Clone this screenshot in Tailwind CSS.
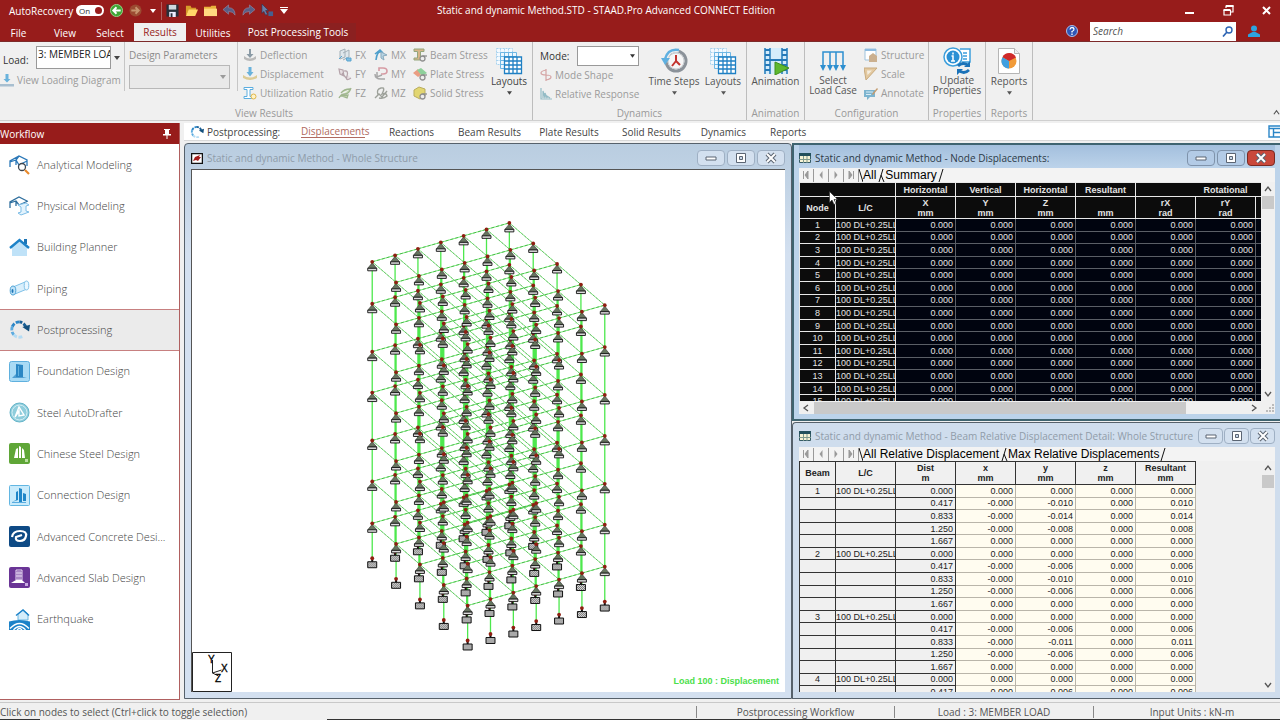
<!DOCTYPE html>
<html lang="en">
<head>
  <meta charset="UTF-8">
  <title>Static and dynamic Method.STD - STAAD.Pro Advanced CONNECT Edition</title>
  <meta name="viewport" content="width=device-width, initial-scale=1.0">
  <script src="https://cdn.jsdelivr.net/npm/@tailwindcss/browser@4"></script>
</head>
<body class="h-screen overflow-hidden flex flex-col bg-[#f0f0f0] text-[#444] text-[10px] leading-3 font-['Open_Sans','Noto_Sans',sans-serif] whitespace-nowrap">

  <!-- ICON SPRITES -->
  <svg class="hidden">
    <symbol id="i-down" viewBox="0 0 6 4"><path d="M0 0h6L3 4z" fill="currentColor"/></symbol>
    <symbol id="i-layouts" viewBox="0 0 28 28">
      <g fill="#f4faff" stroke="#a8d2ee"><path d="M1.5 1.5h16v16h-16zM1.5 5.500h16M1.500 9.500h16M1.500 13.500h16M5.500 1.500v16M9.500 1.500v16M13.500 1.500v16" stroke-dasharray="2 1"/></g>
      <path d="M5.500 5.500h16v16h-16zM5.500 9.500h16M5.500 13.500h16M5.500 17.500h16M9.500 5.500v16M13.500 5.500v16M17.500 5.500v16" fill="#eef8ff" stroke="#6fb7e4"/>
      <path d="M9.500 10h17v16.500h-17zM9.500 14h17M9.500 18h17M9.500 22h17M14 10v16.500M18 10v16.500M22 10v16.500" fill="#fff" stroke="#1f80c4" stroke-width="1.300"/>
    </symbol>
    <symbol id="i-deflect" viewBox="0 0 14 14"><path d="M1 8q6 5 12 0v3q-6 4-12 0z" fill="#b9b9b9"/><path d="M6 1h2v5h2.500L7 10 3.500 6H6z" fill="#8a9aa5"/></symbol>
    <symbol id="i-displ" viewBox="0 0 14 14"><path d="M0 8q7 5 14 0v3q-7 4-14 0z" fill="#dccb96"/><path d="M5.500 0h3v5h2L7 9.500 3.500 5h2z" fill="#69b2dc"/></symbol>
    <symbol id="i-util" viewBox="0 0 14 14"><path d="M1 1.500h9v2H7v7h2v2H1v-2h3v-7H1z" fill="#fff" stroke="#5caee0"/><circle cx="10.500" cy="10.500" r="2.500" fill="#fff3c8" stroke="#e0b64a"/></symbol>
    <symbol id="i-fx" viewBox="0 0 14 14"><path d="M2 3l5-2v8l-5 2zM5 5l6-3v7l-6 3" fill="#dfe7ec" stroke="#a3b0b8"/><path d="M1 11l3-3m4 2h5v3h-4z" stroke="#5aa5d0" fill="#7fbde0"/></symbol>
    <symbol id="i-fy" viewBox="0 0 14 14"><path d="M1 2l4 1 1 6-4-2zM6 4q5-1 3 5t4 2M4 6l5 6" fill="#e7dfe2" stroke="#b5a3aa" stroke-width="1.200"/></symbol>
    <symbol id="i-fz" viewBox="0 0 14 14"><path d="M1 12q2-4 6-4T13 2M3 7q3-4 9-4M4 10l6-1-1 3z" fill="#c9dcb5" stroke="#9fb58e" stroke-width="1.300"/></symbol>
    <symbol id="i-mx" viewBox="0 0 14 14"><path d="M2 12q1-9 5-8M1 6l5-4 3 3" fill="none" stroke="#4d9fcc" stroke-width="1.600"/><path d="M7 4l6 3-4 1 1 4-3-2z" fill="#b8d4e4" stroke="#87a9bd"/></symbol>
    <symbol id="i-my" viewBox="0 0 14 14"><path d="M5 4V1h4q4 0 4 3t-4 3H7" fill="none" stroke="#d69aa3" stroke-width="1.600"/><path d="M1 7q0 5 6 5h4M3 5v5l5-2" fill="none" stroke="#a8a8a8" stroke-width="1.500"/></symbol>
    <symbol id="i-mz" viewBox="0 0 14 14"><path d="M1 12l4-4 3 3 5-6M4 9q-2-6 3-7t1 6q4-2 5 2-3 3-8 2" fill="none" stroke="#9da19a" stroke-width="1.400"/></symbol>
    <symbol id="i-sigma" viewBox="0 0 8 8"><circle cx="3.500" cy="4.500" r="2.500" fill="#eee" stroke="#8f8f8f" stroke-width="1.300"/><path d="M3.500 2H8" stroke="#8f8f8f" stroke-width="1.300"/></symbol>
    <symbol id="i-beam" viewBox="0 0 14 14"><path d="M1 1h10v2.500H7.500v6.500H9V12H1v-2h3.500V3.500H1z" fill="#d7b588" stroke="#94a67c"/><use href="#i-sigma" x="6" y="6" width="8" height="8"/></symbol>
    <symbol id="i-plate" viewBox="0 0 14 14"><path d="M0 6l5-4 3 6-3 2z" fill="#ea9e83"/><path d="M4 3l4-2 6 5-5 3z" fill="#8ed09b"/><use href="#i-sigma" x="6" y="6" width="8" height="8"/></symbol>
    <symbol id="i-solid" viewBox="0 0 14 14"><path d="M1 4l5-3 6 2v7l-5 3-6-3z" fill="#e2d671" stroke="#b9ad5e"/><use href="#i-sigma" x="6" y="6" width="8" height="8"/></symbol>
    <symbol id="i-post" viewBox="0 0 22 22">
      <path d="M17.500 8A8 8 0 0 0 11 3" stroke="#1a5f95"/><path d="M11 3A8 8 0 0 0 3.500 8" stroke="#2c86c6"/><path d="M3.500 8A8 8 0 0 0 5 16.500" stroke="#5cabdf"/><path d="M5 16.500A8 8 0 0 0 15 18" stroke="#b4dcf4"/>
      <path d="M14 8.500l8-2.500-1 7z" fill="#14507d"/>
    </symbol>
    <symbol id="i-table" viewBox="0 0 12 10"><path d="M.5.500h11v9H.500z" fill="#f6f2d5" stroke="#355b66"/><path d="M0 0h12v3H0z" fill="#23505c"/><path d="M0 6.500h12M4.500 3v7M8 3v7" stroke="#7f9a8c"/></symbol>
    <symbol id="i-min" viewBox="0 0 12 12"><path d="M1 5h10v3H1z" fill="#fff" stroke="#5b6573" /></symbol>
    <symbol id="i-max" viewBox="0 0 12 12"><path d="M1.500 1.500h9v9h-9z" fill="#fff" stroke="#5b6573"/><path d="M4.500 4.500h3v3h-3z" fill="#c8d8ea" stroke="#5b6573"/></symbol>
    <symbol id="i-x" viewBox="0 0 12 12"><path d="M2 2l8 8M10 2l-8 8" stroke="#5b6573" stroke-width="4"/><path d="M2 2l8 8M10 2l-8 8" stroke="#fff" stroke-width="2"/></symbol>
    <symbol id="i-first" viewBox="0 0 8 8"><path d="M1.500 0v8M6 0L3 4l3 4z" fill="#999" stroke="#999"/></symbol>
    <symbol id="i-prev" viewBox="0 0 8 8"><path d="M5.500 0l-3 4 3 4z" fill="#999"/></symbol>
    <symbol id="i-chev" viewBox="0 0 8 8"><path d="M1 6l3-4 3 4" fill="none" stroke="#555" stroke-width="1.300"/></symbol>
  </svg>

  <!-- TITLE BAR -->
  <header class="bg-[#971c1b] text-white border-b border-[#7d2a2a]">
    <div class="flex items-center h-[21px] pl-[9px] relative">
      <label for="autorec" class="w-[67px]">AutoRecovery</label>
      <span class="relative flex items-center w-7 h-[11px] bg-white rounded-full">
        <input id="autorec" type="checkbox" checked class="absolute inset-0 opacity-0">
        <span class="text-[8px] leading-[10px] text-[#333] pl-[3px]">On</span>
        <span class="ml-auto mr-[2px] size-[7px] rounded-full bg-[#971c1b]"></span>
      </span>
      <div class="flex items-center gap-[6px] ml-[6px]">
        <button aria-label="Back"><svg class="size-[13px]" viewBox="0 0 14 14"><circle cx="7" cy="7" r="6.500" fill="#3fa535" stroke="#9bd88f"/><path d="M11.500 7H4M7 3.500L3.500 7 7 10.500" fill="none" stroke="#fff" stroke-width="2"/></svg></button>
        <button aria-label="Forward"><svg class="size-[13px]" viewBox="0 0 14 14"><circle cx="7" cy="7" r="6.500" fill="#9b4a31"/><path d="M2.500 7H10M7 3.500L10.500 7 7 10.500" fill="none" stroke="#c8946f" stroke-width="2"/></svg></button>
        <button aria-label="History" class="ml-[2px]"><svg class="w-[6px] h-1"><use href="#i-down"/></svg></button>
      </div>
      <div class="flex items-center gap-[6px] ml-[5px] pl-[4px] border-l border-[#b5605f] h-[18px]">
        <button aria-label="Save"><svg class="size-[13px]" viewBox="0 0 14 14"><path d="M.500.500h13v13H.500z" fill="#28303a"/><path d="M3 1h8v5H3z" fill="#cfd8e0"/><path d="M3.500 8.500h7V14h-7z" fill="#eef"/><path d="M5 10h2v4H5z" fill="#28303a"/></svg></button>
        <button aria-label="Open"><svg class="size-[13px]" viewBox="0 0 14 14"><path d="M1 2h5l1 2h5v3H4l-3 6z" fill="#d79c2a"/><path d="M4 6h10l-3 7H1z" fill="#ffd769"/></svg></button>
        <button aria-label="Close"><svg class="size-[13px]" viewBox="0 0 14 14"><path d="M0 3l7 0 1-1h5v10H0z" fill="#e9b23c"/><path d="M0 5h14v8H0z" fill="#ffd980"/></svg></button>
        <button aria-label="Undo"><svg class="size-[13px]" viewBox="0 0 14 14"><path d="M6 1v3q7 0 7 8-2-4-7-4v3L0 6z" fill="#5a5f86" stroke="#918ba5" stroke-width=".700"/></svg></button>
        <button aria-label="Redo"><svg class="size-[13px]" viewBox="0 0 14 14"><path d="M8 1v3Q1 4 1 12q2-4 7-4v3l6-5z" fill="#5a5f86" stroke="#918ba5" stroke-width=".700"/></svg></button>
        <button aria-label="Pointer"><svg class="size-[13px]" viewBox="0 0 14 14"><path d="M1 0l7 7H5l2 4-2 1-2-4-2 2z" fill="#6b7fa8" stroke="#2f3450" stroke-width=".700"/><path d="M8 8h5v5H8z" fill="#46608f"/></svg></button>
        <button aria-label="Customize"><svg class="w-2 h-[7px]" viewBox="0 0 8 7"><path d="M0 0h8v1H0zM0 2h8L4 7z" fill="#fff"/></svg></button>
      </div>
      <h1 class="absolute left-[437px] top-1">Static and dynamic Method.STD - STAAD.Pro Advanced CONNECT Edition</h1>
      <div class="ml-auto flex items-center gap-[28px] pr-[9px]">
        <button aria-label="Minimize"><svg class="w-[10px] h-[9px]" viewBox="0 0 10 9"><path d="M0 6h9v2H0z" fill="#fff"/></svg></button>
        <button aria-label="Restore"><svg class="size-[11px]" viewBox="0 0 11 11"><path d="M3 3V1h7v6H8M1 5.500h6.500v4.500H1z" fill="none" stroke="#fff" stroke-width="1.200"/><path d="M3 1h7.500M.500 5h7" stroke="#fff" stroke-width="2"/></svg></button>
        <button aria-label="Exit"><svg class="size-[9px]" viewBox="0 0 9 9"><path d="M1 1l7 7M8 1L1 8" stroke="#fff" stroke-width="2"/></svg></button>
      </div>
    </div>
    <nav class="flex h-5 items-end">
      <a href="#" class="w-[37px] pb-[2px] text-center">File</a>
      <a href="#" class="w-[56px] pb-[2px] text-center">View</a>
      <a href="#" class="w-[34px] mr-[7px] pb-[2px] text-center">Select</a>
      <a href="#" class="w-[52px] h-[18px] pt-[3px] text-center bg-[#f0f0f0] text-[#971c1b]">Results</a>
      <a href="#" class="w-[54px] pb-[2px] text-center">Utilities</a>
      <a href="#" class="w-[116px] h-[18px] pt-[3px] text-center bg-[#8b2020]">Post Processing Tools</a>
      <div class="ml-auto flex items-center h-5">
        <button aria-label="Help" class="mr-3"><svg class="size-3" viewBox="0 0 12 12"><circle cx="6" cy="6" r="5.500" fill="#2f55b5" stroke="#a9bdea"/><path d="M4 4.500q.300-2 2-2t2 1.500-2 2.500v1M6 8.500V10" fill="none" stroke="#fff" stroke-width="1.300"/></svg></button>
        <label class="flex items-center w-[146px] h-[19px] bg-white px-[3px]">
          <input type="search" aria-label="Search" placeholder="Search" class="w-full outline-none italic placeholder:text-[#555]">
          <svg class="size-[11px] shrink-0" viewBox="0 0 11 11"><circle cx="7" cy="4" r="3" fill="none" stroke="#2d64b3" stroke-width="1.400"/><path d="M5 6L1 10.500" stroke="#2d64b3" stroke-width="1.700"/></svg>
        </label>
        <button aria-label="Account" class="ml-3 mr-5"><svg class="size-3" viewBox="0 0 12 12"><circle cx="6" cy="3.500" r="3" fill="#2da3e0"/><path d="M0 12V9.500L4.500 7h3L12 9.500V12z" fill="#2da3e0"/></svg></button>
      </div>
    </nav>
  </header>

  <!-- RIBBON -->
  <section class="flex h-[79px] shrink-0 border-b border-[#cfcfcf] text-[#555]">
    <div class="flex flex-col w-[533px] border-r border-[#bdbdbd]">
      <div class="flex h-[62px] text-[#9b9b9b]">
        <div class="w-[125px] pt-1 h-[49px] border-r border-[#c6c6c6]">
          <div class="flex items-center h-[23px]">
            <label for="load" class="w-[36px] pl-[3px] pt-[4px] text-[#333]">Load:</label>
            <select id="load" class="appearance-none w-[75px] h-[23px] pb-[7px] pl-[1px] bg-white border border-[#999] text-[#222] overflow-hidden"><option>3: MEMBER LOAD</option></select>
            <svg class="w-[6px] h-1 ml-[3px] text-[#444]"><use href="#i-down"/></svg>
          </div>
          <button class="flex items-center gap-[3px] h-[22px]"><svg class="w-[14px] h-[13px]" viewBox="0 0 14 13"><path d="M0 10h14v2.500H0z" fill="#a8bfd0"/><path d="M5.500 0h3v5h2L7 8.500 3.500 5h2z" fill="#69b2dc"/></svg>View Loading Diagram</button>
        </div>
        <div class="w-[113px] h-[49px] pt-[7px] pl-1 border-r border-[#c6c6c6]">
          <label for="params" class="block text-[#8b8b8b]">Design Parameters</label>
          <div class="relative w-[101px] mt-[4px]">
            <select id="params" disabled class="appearance-none w-full h-6 bg-[#e9e9e9] border border-[#b8b8b8]"><option></option></select>
            <svg class="absolute right-1 top-[10px] w-[6px] h-1"><use href="#i-down"/></svg>
          </div>
        </div>
        <div class="grid grid-cols-[95px_36px_39px_78px] auto-rows-[19px] content-start pt-[3px] pl-[5px]">
          <button class="flex items-center gap-[3px]"><svg class="size-[14px]"><use href="#i-deflect"/></svg>Deflection</button>
          <button class="flex items-center gap-[3px]"><svg class="size-[14px]"><use href="#i-fx"/></svg>FX</button>
          <button class="flex items-center gap-[3px]"><svg class="size-[14px]"><use href="#i-mx"/></svg>MX</button>
          <button class="flex items-center gap-[3px]"><svg class="size-[14px]"><use href="#i-beam"/></svg>Beam Stress</button>
          <button class="flex items-center gap-[3px]"><svg class="size-[14px]"><use href="#i-displ"/></svg>Displacement</button>
          <button class="flex items-center gap-[3px]"><svg class="size-[14px]"><use href="#i-fy"/></svg>FY</button>
          <button class="flex items-center gap-[3px]"><svg class="size-[14px]"><use href="#i-my"/></svg>MY</button>
          <button class="flex items-center gap-[3px]"><svg class="size-[14px]"><use href="#i-plate"/></svg>Plate Stress</button>
          <button class="flex items-center gap-[3px]"><svg class="size-[14px]"><use href="#i-util"/></svg>Utilization Ratio</button>
          <button class="flex items-center gap-[3px]"><svg class="size-[14px]"><use href="#i-fz"/></svg>FZ</button>
          <button class="flex items-center gap-[3px]"><svg class="size-[14px]"><use href="#i-mz"/></svg>MZ</button>
          <button class="flex items-center gap-[3px]"><svg class="size-[14px]"><use href="#i-solid"/></svg>Solid Stress</button>
        </div>
        <button class="flex flex-col items-center w-[36px] pt-[5px] text-[#444]"><svg class="size-7"><use href="#i-layouts"/></svg>Layouts<svg class="w-[5px] h-1 mt-1"><use href="#i-down"/></svg></button>
      </div>
      <p class="text-center pt-[3px] pr-1 text-[#999]">View Results</p>
    </div>

    <div class="flex flex-col w-[214px] border-r border-[#bdbdbd]">
      <div class="flex h-[62px]">
        <div class="w-[114px] pl-[7px] pt-1 text-[#9b9b9b]">
          <div class="flex items-center">
            <label for="mode" class="w-[37px] text-[#333]">Mode:</label>
            <div class="relative w-[62px]">
              <select id="mode" class="block appearance-none w-full h-5 bg-white border border-[#999]"><option></option></select>
              <svg class="absolute right-1 top-2 w-[5px] h-1 text-[#333]"><use href="#i-down"/></svg>
            </div>
          </div>
          <button class="flex items-center gap-[3px] h-[17px]"><svg class="size-3" viewBox="0 0 12 12"><path d="M6 0v12M6 1Q1 2 1 4t5 2 5 2-5 3" fill="none" stroke="#d5a3a3" stroke-width="1.200"/></svg>Mode Shape</button>
          <button class="flex items-center gap-[3px] h-[22px]"><svg class="size-3" viewBox="0 0 12 12"><path d="M1 0v11h11M3 10V3l2 7V5l2 5V8l3 2" fill="none" stroke="#94bcc6" stroke-width="1.200"/></svg>Relative Response</button>
        </div>
        <button class="flex flex-col items-center w-[54px] pt-[5px]"><svg class="size-7" viewBox="0 0 28 28"><circle cx="16" cy="14" r="10" fill="#f6f6f6" stroke="#8b9299" stroke-width="3"/><circle cx="16" cy="14" r="8" fill="none" stroke="#c7ccd0"/><path d="M16 8v6l-4 5M16 14l4 4" fill="none" stroke="#c3332e" stroke-width="2"/><path d="M19 3Q8 1 5 12" fill="none" stroke="#f0f0f0" stroke-width="5"/><path d="M19 3Q8 1 5 12" fill="none" stroke="#5fb0e0" stroke-width="2.500"/><path d="M1 11h9l-5 7z" fill="#5fb0e0"/></svg>Time Steps<svg class="w-[5px] h-1 mt-1"><use href="#i-down"/></svg></button>
        <button class="flex flex-col items-center w-[44px] pt-[5px]"><svg class="size-7"><use href="#i-layouts"/></svg>Layouts<svg class="w-[5px] h-1 mt-1"><use href="#i-down"/></svg></button>
      </div>
      <p class="text-center pt-[3px] text-[#999]">Dynamics</p>
    </div>

    <div class="flex flex-col w-[58px] border-r border-[#bdbdbd]">
      <button class="flex flex-col items-center h-[62px] pt-[5px]"><svg class="size-7" viewBox="0 0 28 28"><path d="M2 1h24v26H2z" fill="#d3ecfb"/><path d="M3 1v26M8 1v26M20 1v26M25 1v26" stroke="#2479b8" stroke-width="1.500"/><path d="M3 3h5M3 8h5M3 13h5M3 18h5M3 23h5M20 3h5M20 8h5M20 13h5M20 18h5M20 23h5M8 13h12" stroke="#2479b8" stroke-width="2"/><path d="M13 15l14 6-14 7z" fill="#5eb82e" stroke="#3f8f1c"/></svg>Animation</button>
      <p class="text-center pt-[3px] text-[#999]">Animation</p>
    </div>

    <div class="flex flex-col w-[124px] border-r border-[#bdbdbd]">
      <div class="flex h-[62px]">
        <button class="flex flex-col items-center w-[56px] pt-[5px] leading-[10px]"><svg class="size-7 shrink-0" viewBox="0 0 28 28"><path d="M4 22V5h20v17M11 5v17M17 5v17" fill="none" stroke="#2d8fd0" stroke-width="1.500"/><path d="M1 18h6l-3 6zM8 18h6l-3 6zM14 18h6l-3 6zM21 18h6l-3 6z" fill="#2d8fd0"/></svg>Select<br>Load Case</button>
        <div class="grid auto-rows-[19px] content-start pt-[3px] pl-[3px] text-[#9b9b9b]">
          <button class="flex items-center gap-[3px]"><svg class="size-[14px]" viewBox="0 0 14 14"><path d="M1 1h11v11H1z" fill="#fff" stroke="#9fc3dc"/><path d="M1 1h11v2H1z" fill="#8cbbe0"/><path d="M5 8l4-3 4 3v6H5z" fill="#cbb08f"/></svg>Structure</button>
          <button class="flex items-center gap-[3px]"><svg class="size-[14px]" viewBox="0 0 14 14"><path d="M0 1h13L2 13z" fill="#e3c9a0" stroke="#c9ab7e"/><path d="M3 3.500h5L3.500 8z" fill="#f4ede0"/></svg>Scale</button>
          <button class="flex items-center gap-[3px]"><svg class="size-[14px]" viewBox="0 0 14 14"><path d="M0 4h11v7H6l-3 3v-3H0z" fill="#7db4cf"/><path d="M2 6h7M2 8.500h5" stroke="#d9ecf5"/><path d="M8 8l5-6 1 1-5 6z" fill="#c49b6d"/></svg>Annotate</button>
        </div>
      </div>
      <p class="text-center pt-[3px] text-[#999]">Configuration</p>
    </div>

    <div class="flex flex-col w-[57px] border-r border-[#bdbdbd]">
      <button class="flex flex-col items-center h-[62px] pt-[5px] leading-[10px]"><svg class="size-7 shrink-0" viewBox="0 0 28 28"><path d="M17 2h10v13h-8" fill="#fff" stroke="#3d9fdc" stroke-width="1.500"/><path d="M20 6h4M20 9h4M20 12h4" stroke="#3d9fdc" stroke-width="1.500"/><circle cx="10" cy="10" r="9" fill="#fff" stroke="#3d9fdc" stroke-width="1.500"/><circle cx="10" cy="10" r="6.500" fill="#2b90d4"/><path d="M10 5.500v2M8.500 9H10v5M8 14h4" fill="none" stroke="#fff" stroke-width="1.500"/><path d="M15 19q5-5 11 0M26 23q-5 5-11 0" fill="none" stroke="#1b72b8" stroke-width="2.800"/><path d="M27 14v6h-6zM14 28v-6h6z" fill="#1b72b8"/></svg>Update<br>Properties</button>
      <p class="text-center pt-[3px] text-[#999]">Properties</p>
    </div>

    <div class="flex flex-col w-[47px] border-r border-[#bdbdbd]">
      <button class="flex flex-col items-center h-[62px] pt-[5px]"><svg class="size-7" viewBox="0 0 28 28"><path d="M3.500 1.500h16l5 5v20h-21z" fill="#fff" stroke="#b5b5b5"/><path d="M19.500 1.500v5h5" fill="#eee" stroke="#b5b5b5"/><circle cx="14" cy="14" r="7.500" fill="#f19a38"/><path d="M14 14L7.500 10.200a7.500 7.500 0 0 1 13.500.3z" fill="#cf2a2a"/><path d="M14 14L7.500 10.200A7.500 7.500 0 0 0 14 21.500z" fill="#3f9fe0"/></svg>Reports<svg class="w-[5px] h-1 mt-1"><use href="#i-down"/></svg></button>
      <p class="text-center pt-[3px] text-[#999]">Reports</p>
    </div>
    <button aria-label="Collapse ribbon" class="ml-auto self-end pb-1"><svg class="size-[7px]"><use href="#i-chev"/></svg></button>
  </section>

  <div class="flex flex-1 min-h-0 pt-[2px] gap-[4px]">

    <!-- WORKFLOW -->
    <aside class="w-[180px] shrink-0 mb-[2px] bg-white border-r border-b border-[#b06060]">
      <div class="flex items-center justify-between h-[21px] bg-[#971c1b] text-white pr-2">
        <h2>Workflow</h2>
        <svg class="w-2 h-[10px]" viewBox="0 0 8 10"><path d="M1 0h6v1H6v4h2v1.500H0V5h2V1H1zM3.500 6.500h1V10h-1z" fill="#fff"/></svg>
      </div>
      <ul class="grid grid-rows-12 h-[496px] text-[11px] leading-4 font-light text-[#444]">
        <li class="flex items-center gap-[7px] pl-[9px]"><svg class="size-[21px]" viewBox="0 0 21 21"><path d="M1 13V7l9-5 8 4v6M1 8l6-2 3 5 8-4M10 2l-3 4M7 6v5" fill="none" stroke="#2b78b8" stroke-width="1.300"/><circle cx="13" cy="13" r="3.500" fill="#fff" stroke="#3d4650" stroke-width="1.300"/><path d="M16 16l4 4" stroke="#e8892b" stroke-width="2.200"/></svg><a href="#">Analytical Modeling</a></li>
        <li class="flex items-center gap-[7px] pl-[9px]"><svg class="size-[21px]" viewBox="0 0 21 21"><path d="M1 13V7l9-5 8 4M1 8l6-2 3 4 9-4M7 6v5" fill="none" stroke="#2f6f9e" stroke-width="1.300"/><path d="M9 10l8-2 3 2-3 1v5l3 1-8 3-3-2 3-1v-5z" fill="#e3f3fd" stroke="#7dbde6"/></svg><a href="#">Physical Modeling</a></li>
        <li class="flex items-center gap-[7px] pl-[9px]"><svg class="size-[21px]" viewBox="0 0 21 21"><path d="M3 10l7.500-6L18 10v9H3z" fill="#bfe2f8"/><path d="M15 2h3v5h-3z" fill="#1c74b5"/><path d="M1 11l9.500-8L20 11" fill="none" stroke="#1c82c8" stroke-width="2.400"/></svg><a href="#">Building Planner</a></li>
        <li class="flex items-center gap-[7px] pl-[9px]"><svg class="size-[21px]" viewBox="0 0 21 21"><path d="M4 9l12-5 2 7-12 5z" fill="#d9effc" stroke="#7fc1e8"/><ellipse cx="4" cy="12.500" rx="2.800" ry="4.500" fill="#bfe2f8" stroke="#4da3d6"/><ellipse cx="3.500" cy="13" rx="1" ry="2" fill="#1c74b5"/><ellipse cx="17.500" cy="7.500" rx="2.300" ry="4.500" fill="#eaf7ff" stroke="#7fc1e8"/></svg><a href="#">Piping</a></li>
        <li class="flex items-center gap-[7px] pl-[9px] bg-[#ebebeb] border-y border-[#c78080]"><svg class="size-[21px]" fill="none" stroke-width="3" stroke-dasharray="4 1.500"><use href="#i-post"/></svg><a href="#">Postprocessing</a></li>
        <li class="flex items-center gap-[7px] pl-[9px]"><svg class="size-[21px]" viewBox="0 0 21 21"><rect x=".500" y=".500" width="20" height="20" rx="2" fill="#a9dbf5" stroke="#5fb0de"/><path d="M7 3l7 1v12H7z" fill="#2b87c4"/><path d="M3 17l4-4v3h7l4 1z" fill="#4f9fd2"/><path d="M9.500 5v10" stroke="#5fb0de"/></svg><a href="#">Foundation Design</a></li>
        <li class="flex items-center gap-[7px] pl-[9px]"><svg class="size-[21px]" viewBox="0 0 21 21"><circle cx="10.500" cy="10.500" r="9.500" fill="#8fcddc" stroke="#62b3c8"/><circle cx="10.500" cy="10.500" r="7.500" fill="none" stroke="#d5eff5"/><path d="M6 15l4-10 5 8-5 1v-5z" fill="none" stroke="#fff" stroke-width="1.400"/></svg><a href="#">Steel AutoDrafter</a></li>
        <li class="flex items-center gap-[7px] pl-[9px]"><svg class="size-[21px]" viewBox="0 0 21 21"><rect width="21" height="21" rx="2" fill="#5fa637"/><path d="M5 15l2-9 2-1v10zM10 3l2 1v11h-2zM13 5l2 2 1 8h-3z" fill="#fff"/><path d="M16 16h3v3h-3z" fill="#b9de9f"/></svg><a href="#">Chinese Steel Design</a></li>
        <li class="flex items-center gap-[7px] pl-[9px]"><svg class="size-[21px]" viewBox="0 0 21 21"><rect x=".500" y=".500" width="20" height="20" rx="1" fill="#c9ebfb" stroke="#62b6e2"/><path d="M3 17l4-2V7l2-1v9zM10 3l3 1v13h-3zM14 8l3 1v7h-3z" fill="#1f86c8"/><path d="M3 17.500h14" stroke="#5bade0"/></svg><a href="#">Connection Design</a></li>
        <li class="flex items-center gap-[7px] pl-[9px]"><svg class="size-[21px]" viewBox="0 0 21 21"><rect width="21" height="21" rx="2" fill="#0e4a85"/><path d="M3 11q1-6 8-6t6 5-6 5-4-4q3-1 6-2" fill="none" stroke="#fff" stroke-width="2.200"/></svg><a href="#">Advanced Concrete Desi...</a></li>
        <li class="flex items-center gap-[7px] pl-[9px]"><svg class="size-[21px]" viewBox="0 0 21 21"><rect width="21" height="21" rx="2" fill="#6a3596"/><path d="M7 3h6v10H7zM9 4v9M11 4v9M7 6h6M7 9h6" fill="none" stroke="#e9dcf4"/><path d="M2 16l5-3h6l3 3z" fill="#fff"/><path d="M16 16h3v3h-3z" fill="#c9abe2"/></svg><a href="#">Advanced Slab Design</a></li>
        <li class="flex items-center gap-[7px] pl-[9px]"><svg class="size-[21px]" viewBox="0 0 21 21"><path d="M9 5l5-4 5 4v6H9z" fill="#d4edfb" stroke="#6bb5e0"/><path d="M7 6.500L14 1l6 5.500" fill="none" stroke="#1c82c8" stroke-width="1.500"/><path d="M0 12.500q10-3 21 0V21H0z" fill="#1c82c8"/><path d="M1 19.500q9.500-10 19 0M4.500 21q6-7 12 0M8 21q2.500-3 5 0" fill="none" stroke="#fff" stroke-width="1.300"/></svg><a href="#">Earthquake</a></li>
      </ul>
    </aside>

    <main class="flex flex-col flex-1 min-w-0">
      <nav class="flex items-center h-[18px] bg-white border-b border-[#d8d8d8] pl-[6px]">
        <svg class="size-[14px]" fill="none" stroke-width="3" stroke-dasharray="4 1.500"><use href="#i-post"/></svg>
        <span class="w-[97px] pl-[3px]">Postprocessing:</span>
        <a href="#" class="w-[64px] text-center text-[#b06a60] border-b border-[#b06a60]">Displacements</a>
        <a href="#" class="w-[93px] text-center">Reactions</a>
        <a href="#" class="w-[58px] text-center">Beam Results</a>
        <a href="#" class="w-[106px] text-center">Plate Results</a>
        <a href="#" class="w-[55px] text-center">Solid Results</a>
        <a href="#" class="w-[93px] text-center">Dynamics</a>
        <a href="#" class="w-[35px] text-center">Reports</a>
        <svg class="w-3 h-[13px] ml-auto" viewBox="0 0 12 13"><path d="M1 1h13v11H1zM1 3.500h13M5.500 3v9M5.500 7.500H14" fill="#fff" stroke="#2b86c8" stroke-width="1.400"/></svg>
      </nav>

      <!-- MDI AREA -->
      <div class="grid grid-cols-[minmax(0,608fr)_minmax(0,488fr)] flex-1 min-h-0 mb-[3px] pt-[2px]">
        <section class="flex flex-col min-h-0 border border-[#56616b] rounded-t bg-linear-to-b from-[#b9cde0] to-[#d3e0f0] to-20% px-[6px] pb-[6px]">
          <div class="flex items-center h-[25px] pt-[3px] gap-1">
            <svg class="w-3 h-[11px]" viewBox="0 0 12 11"><path d="M.500.500h11v10H.500z" fill="#fff" stroke="#111" stroke-width="1.500"/><path d="M2 8l2-4 5-2-1 2h2L7 8l-2-1z" fill="#a51d1d"/></svg>
            <h3 class="text-[#8f9ca9]">Static and dynamic Method - Whole Structure</h3>
            <div class="flex ml-auto gap-[2px]">
              <button aria-label="Minimize" class="grid place-items-center w-7 h-4 border border-[#9fb0c4] rounded-sm bg-[#d3e0ef]"><svg class="size-3"><use href="#i-min"/></svg></button>
              <button aria-label="Maximize" class="grid place-items-center w-7 h-4 border border-[#9fb0c4] rounded-sm bg-[#d3e0ef]"><svg class="size-3"><use href="#i-max"/></svg></button>
              <button aria-label="Close" class="grid place-items-center w-7 h-4 border border-[#9fb0c4] rounded-sm bg-[#d3e0ef]"><svg class="size-3"><use href="#i-x"/></svg></button>
            </div>
          </div>
          <div class="relative flex-1 min-h-0 bg-white border-t border-l border-[#555]">
            <svg id="model" class="w-full h-full" viewBox="0 0 593 523">
              <defs>
                <pattern id="hatch" width="2" height="2" patternUnits="userSpaceOnUse"><rect width="2" height="2" fill="#ddd"/><path d="M0 0h1v1H0zM1 1h1v1H1z" fill="#777"/></pattern>
                <g id="pin"><path d="M0 1L-4.500 6.500H4.500z" fill="#66745f" stroke="#333" stroke-width=".600"/><path d="M-4.500 6.500h9v2.500h-9z" fill="#ddd" stroke="#111" stroke-width=".900"/><circle r="1.900" fill="#8f1f12"/></g>
                <g id="fix"><path d="M0 0v5" stroke="#111" stroke-width="2"/><path d="M-4.500 3.500h9v6h-9z" fill="url(#hatch)" stroke="#111"/><circle r="1.900" fill="#8f1f12"/></g>
              </defs>
            </svg>
            <svg class="absolute left-0 bottom-0 size-10" viewBox="0 0 40 40"><path d="M.500.500h39v39H.500z" fill="#fff" stroke="#222"/><path d="M20.500 8v13l9-3M20.500 21l6 3" fill="none" stroke="#222"/><g font-family="Liberation Sans" font-size="10" stroke="#000" stroke-width=".300"><text x="16" y="11">Y</text><text x="29" y="20">X</text><text x="23" y="30">Z</text></g></svg>
            <p class="absolute right-[6px] bottom-[5px] text-[9px] font-bold font-['Liberation_Sans',sans-serif] text-[#4be04b]">Load 100 : Displacement</p>
          </div>
        </section>

        <div class="grid grid-rows-2 min-h-0 min-w-0">
          <section class="flex flex-col min-h-0 min-w-0 border-2 border-r-0 border-[#3f6470] bg-[#bcd3ea] pl-[5px] pr-[5px] pb-[5px]">
            <div class="flex items-center h-[23px] pt-[2px] gap-1 bg-linear-to-b from-[#a3bfdd] to-[#bcd3ea]">
              <svg class="w-3 h-[10px] shrink-0"><use href="#i-table"/></svg>
              <h3 class="text-[#2c3947]">Static and dynamic Method - Node Displacements:</h3>
              <div class="flex ml-auto gap-[2px]">
                <button aria-label="Minimize" class="grid place-items-center w-7 h-4 border border-[#7f93ab] rounded-sm bg-[#b3cbe6]"><svg class="size-3"><use href="#i-min"/></svg></button>
                <button aria-label="Maximize" class="grid place-items-center w-7 h-4 border border-[#7f93ab] rounded-sm bg-[#b3cbe6]"><svg class="size-3"><use href="#i-max"/></svg></button>
                <button aria-label="Close" class="grid place-items-center w-7 h-4 border border-[#7a2a22] rounded-sm bg-[#c9483b]"><svg class="size-3"><use href="#i-x"/></svg></button>
              </div>
            </div>
            <div class="flex items-center h-[14px] bg-[#f3f3f3] text-[12px] leading-[14px] text-black font-['Liberation_Sans',sans-serif]">
              <button aria-label="First" class="grid place-items-center w-[15px] h-[13px] border-r border-[#999]"><svg class="size-2"><use href="#i-first"/></svg></button>
              <button aria-label="Previous" class="grid place-items-center w-[15px] h-[13px] border-r border-[#999]"><svg class="size-2"><use href="#i-prev"/></svg></button>
              <button aria-label="Next" class="grid place-items-center w-[15px] h-[13px] border-r border-[#999]"><svg class="size-2 rotate-180"><use href="#i-prev"/></svg></button>
              <button aria-label="Last" class="grid place-items-center w-[15px] h-[13px] border-r border-[#999]"><svg class="size-2 rotate-180"><use href="#i-first"/></svg></button>
              <svg class="w-1 h-[13px]" viewBox="0 0 4 13"><path d="M0 0l4 13" stroke="#111"/></svg>
              <button>All</button>
              <svg class="w-[9px] h-[13px]" viewBox="0 0 9 13"><path d="M3 13L7 0M5 6l3 7" stroke="#111"/></svg>
              <button>Summary</button>
              <svg class="w-[7px] h-[13px]" viewBox="0 0 7 13"><path d="M2 13L6 0" stroke="#111"/></svg>
            </div>
            <div class="flex flex-1 min-h-0 bg-[#f0f0f0]">
              <div class="flex-1 min-w-0 overflow-hidden bg-[#00040f]">
                <table class="table-fixed border-collapse w-[516px] h-[226px] text-[9px] leading-[10px] text-[#e4e4e4] font-['Liberation_Sans',sans-serif]">
                  <colgroup><col class="w-[36px]"><col span="8" class="w-[60px]"></colgroup>
                  <thead class="bg-[#0c0c0c] text-center">
                    <tr class="h-[14px]">
                      <th colspan="2" class="border border-[#e8e8e8]"></th>
                      <th class="border border-[#e8e8e8]">Horizontal</th>
                      <th class="border border-[#e8e8e8]">Vertical</th>
                      <th class="border border-[#e8e8e8]">Horizontal</th>
                      <th class="border border-[#e8e8e8]">Resultant</th>
                      <th colspan="3" class="border border-[#e8e8e8]">Rotational</th>
                    </tr>
                    <tr class="h-[22px] align-bottom">
                      <th class="align-middle border border-[#e8e8e8]">Node</th>
                      <th class="align-middle border border-[#e8e8e8]">L/C</th>
                      <th class="border border-[#e8e8e8]">X<br>mm</th>
                      <th class="border border-[#e8e8e8]">Y<br>mm</th>
                      <th class="border border-[#e8e8e8]">Z<br>mm</th>
                      <th class="border border-[#e8e8e8]">mm</th>
                      <th class="border border-[#e8e8e8]">rX<br>rad</th>
                      <th class="border border-[#e8e8e8]">rY<br>rad</th>
                      <th class="border border-[#e8e8e8]"></th>
                    </tr>
                  </thead>
                  <tbody id="nodes"></tbody>
                </table>
              </div>
              <div class="flex flex-col items-center justify-between w-[14px] py-[3px] bg-[#f0f0f0]">
                <svg class="size-2"><use href="#i-chev"/></svg>
                <span class="w-3 h-[13px] mt-[3px] mb-auto bg-[#c9c9c9]"></span>
                <svg class="size-2 rotate-180"><use href="#i-chev"/></svg>
              </div>
            </div>
            <div class="flex items-center h-[13px] bg-[#f0f0f0] pl-[3px] pr-[1px] gap-1">
              <svg class="size-2 -rotate-90"><use href="#i-chev"/></svg>
              <div class="flex-1"><div class="w-[86%] h-3 bg-[#c9c9c9]"></div></div>
              <svg class="size-2 rotate-90 mr-1"><use href="#i-chev"/></svg>
              <svg class="size-2" viewBox="0 0 8 8"><path d="M6 0h2v2H6zM3 3h2v2H3zM6 3h2v2H6zM0 6h2v2H0zM3 6h2v2H3zM6 6h2v2H6z" fill="#bbb"/></svg>
            </div>
          </section>

          <section class="flex flex-col min-h-0 min-w-0 border border-r-0 border-[#56616b] rounded-tl bg-[#cfdded] mt-[1px] pl-[6px] pr-[5px] pb-[6px]">
            <div class="flex items-center h-[24px] pt-[2px] gap-1">
              <svg class="w-3 h-[10px] shrink-0"><use href="#i-table"/></svg>
              <h3 class="flex-1 min-w-0 text-[#8f9ca9]">Static and dynamic Method - Beam Relative Displacement Detail: Whole Structure</h3>
              <div class="flex shrink-0 gap-px">
                <button aria-label="Minimize" class="grid place-items-center w-[25px] h-4 border border-[#9fb0c4] rounded-sm bg-[#d3e0ef]"><svg class="size-3"><use href="#i-min"/></svg></button>
                <button aria-label="Maximize" class="grid place-items-center w-[25px] h-4 border border-[#9fb0c4] rounded-sm bg-[#d3e0ef]"><svg class="size-3"><use href="#i-max"/></svg></button>
                <button aria-label="Close" class="grid place-items-center w-[25px] h-4 border border-[#9fb0c4] rounded-sm bg-[#d3e0ef]"><svg class="size-3"><use href="#i-x"/></svg></button>
              </div>
            </div>
            <div class="flex items-center h-[14px] bg-[#f3f3f3] text-[12px] leading-[14px] text-black font-['Liberation_Sans',sans-serif]">
              <button aria-label="First" class="grid place-items-center w-[15px] h-[13px] border-r border-[#999]"><svg class="size-2"><use href="#i-first"/></svg></button>
              <button aria-label="Previous" class="grid place-items-center w-[15px] h-[13px] border-r border-[#999]"><svg class="size-2"><use href="#i-prev"/></svg></button>
              <button aria-label="Next" class="grid place-items-center w-[15px] h-[13px] border-r border-[#999]"><svg class="size-2 rotate-180"><use href="#i-prev"/></svg></button>
              <button aria-label="Last" class="grid place-items-center w-[15px] h-[13px] border-r border-[#999]"><svg class="size-2 rotate-180"><use href="#i-first"/></svg></button>
              <svg class="w-1 h-[13px]" viewBox="0 0 4 13"><path d="M0 0l4 13" stroke="#111"/></svg>
              <button>All Relative Displacement</button>
              <svg class="w-[9px] h-[13px]" viewBox="0 0 9 13"><path d="M3 13L7 0M5 6l3 7" stroke="#111"/></svg>
              <button>Max Relative Displacements</button>
              <svg class="w-[7px] h-[13px]" viewBox="0 0 7 13"><path d="M2 13L6 0" stroke="#111"/></svg>
            </div>
            <div class="flex flex-1 min-h-0 bg-[#f0f0f0]">
              <div class="flex-1 min-w-0 overflow-hidden">
                <table class="table-fixed border-collapse w-[396px] h-[238px] text-[9px] leading-[10px] text-[#222] font-['Liberation_Sans',sans-serif]">
                  <colgroup><col class="w-[36px]"><col span="6" class="w-[60px]"></colgroup>
                  <thead class="text-center">
                    <tr class="h-[23px]">
                      <th class="border border-[#333]">Beam</th>
                      <th class="border border-[#333]">L/C</th>
                      <th class="border border-[#333]">Dist<br>m</th>
                      <th class="border border-[#333]">x<br>mm</th>
                      <th class="border border-[#333]">y<br>mm</th>
                      <th class="border border-[#333]">z<br>mm</th>
                      <th class="border border-[#333]">Resultant<br>mm</th>
                    </tr>
                  </thead>
                  <tbody id="beams"></tbody>
                </table>
              </div>
              <div class="flex flex-col items-center justify-between w-[14px] py-[3px]">
                <svg class="size-2"><use href="#i-chev"/></svg>
                <span class="w-3 h-[13px] mt-[3px] mb-auto bg-[#c9c9c9]"></span>
                <svg class="size-2 rotate-180"><use href="#i-chev"/></svg>
              </div>
            </div>
          </section>
        </div>
      </div>
    </main>
  </div>

  <!-- STATUS BAR -->
  <footer class="shrink-0 border-t border-[#c9c9c9] text-[#555]">
    <div class="flex items-center h-[16px] pt-[2px]">
      <span class="flex-1">Click on nodes to select (Ctrl+click to toggle selection)</span>
      <span class="w-[198px] text-center border-l border-[#888]">Postprocessing Workflow</span>
      <span class="w-[199px] text-center border-l border-[#888]">Load : 3: MEMBER LOAD</span>
      <span class="w-[187px] pl-[10px] text-center border-l border-[#888]">Input Units : kN-m</span>
    </div>
    <div class="flex justify-between h-px"><span class="w-10 bg-[#333]"></span><span class="w-[953px] bg-[#333]"></span></div>
  </footer>

  <!-- mouse pointer -->
  <svg class="absolute left-[829px] top-[191px] w-[9px] h-[14px]" viewBox="0 0 9 14"><path d="M.500.500v11l2.500-2.500 2 4.500 2-1-2-4h3.500z" fill="#fff" stroke="#222" stroke-width=".600"/></svg>

  <script>
    // node displacement rows
    let html = '';
    for (let n = 1; n <= 15; n++) {
      html += `<tr><td class="p-0 text-center border border-[#e8e8e8] bg-[#0c0c0c]">${n}</td>` +
        '<td class="p-0 overflow-hidden border border-[#e8e8e8] bg-[#0c0c0c]">100 DL+0.25LL</td>' +
        '<td class="p-0 pr-[2px] text-right border border-[#5a5f66]">0.000</td>'.repeat(6) +
        '<td class="p-0 border border-[#5a5f66]"></td></tr>';
    }
    document.getElementById('nodes').innerHTML = html;

    // beam relative displacement: resultant for each section
    const dist = ['0.000', '0.417', '0.833', '1.250', '1.667'];
    const beams = [
      ['0.000', '0.010', '0.014', '0.008', '0.000'],
      ['0.000', '0.006', '0.010', '0.006', '0.000'],
      ['0.000', '0.006', '0.011', '0.006', '0.000'],
      ['0.000', '0.006']
    ];
    html = '';
    beams.forEach((rows, b) => rows.forEach((v, i) => {
      const neg = v !== '0.000' && b < 3 ? '-' : '';
      html += `<tr><td class="p-0 text-center border border-[#333]">${i ? '' : b + 1}</td>` +
        `<td class="p-0 overflow-hidden border border-[#333]">${i ? '' : '100 DL+0.25LL'}</td>` +
        `<td class="p-0 pr-[2px] text-right border border-[#333]">${dist[i]}</td>` +
        [neg + '0.000', neg + v, '0.000', v].map(t => `<td class="p-0 pr-[2px] text-right border border-[#b9b5aa] bg-[#fffcf0]">${t}</td>`).join('') + '</tr>';
    }));
    document.getElementById('beams').innerHTML = html;

    // frame: 7 x 5 grid of columns, 7 floors and the base
    const floors = [92, 134, 182, 223, 271, 312, 354, 389];
    const pt = (i, j, k) => [180 + i * 22.9 + j * 23.9, floors[k] - i * 6.5 + j * 20.6];
    let lines = '', cross = '', marks = '';
    for (let k = 7; k >= 0; k--) {
      for (let j = 0; j < 5; j++) {
        for (let i = 6; i >= 0; i--) {
          const [x, y] = pt(i, j, k);
          marks += `<use href="#${k === 7 ? 'fix' : 'pin'}" x="${x}" y="${y}"/>`;
          if (k === 7) continue;
          if (i < 6) lines += `M${x} ${y}L${pt(i + 1, j, k)}`;
          if (j < 4) cross += `M${x} ${y}L${pt(i, j + 1, k)}`;
        }
      }
    }
    let cols = '';
    for (let j = 0; j < 5; j++) for (let i = 0; i < 7; i++) cols += `M${pt(i, j, 0)}L${pt(i, j, 7)}`;
    document.getElementById('model').insertAdjacentHTML('beforeend',
      `<g fill="none"><path d="${cols}" stroke="#4de84d" stroke-width="1.300"/><path d="${lines}${cross}" stroke="#6eea6e" stroke-width=".900"/>` +
      `<path d="${lines}" stroke="#1f9a1f" stroke-width=".600" stroke-dasharray="3 2"/>` +
      `<path d="${cross}" stroke="#5a8a5a" stroke-width=".600" stroke-dasharray="2 2"/></g>${marks}`);
  </script>
</body>
</html>
